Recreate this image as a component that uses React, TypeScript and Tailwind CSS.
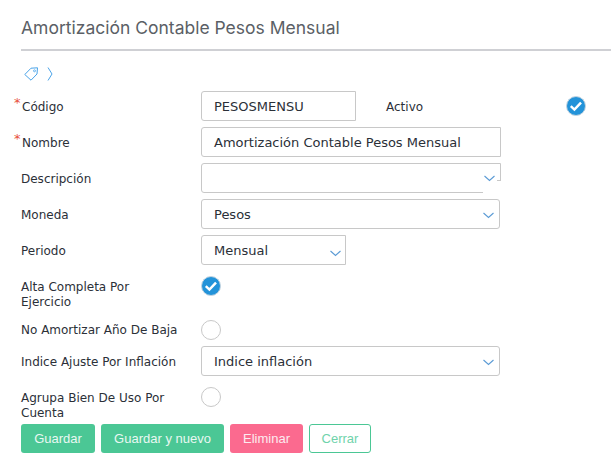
const LABEL = "font-['DejaVu_Sans',sans-serif] text-[12px] leading-[15px] text-[#2b3038]";
const CONTROL = "flex items-center h-[30px] bg-white border border-[#c8c8c8] pl-3 pt-[2px] font-['DejaVu_Sans',sans-serif] text-[13px] text-[#2b3038]";

function Chevron({ className }: { className: string }) {
  return (
    <svg className={className} width="11" height="7" viewBox="0 0 11 7" fill="none">
      <path d="M0.5 1 L5.5 5.5 L10.5 1" stroke="#5b9bd5" strokeWidth="1.1" />
    </svg>
  );
}

function Check({ checked }: { checked: boolean }) {
  if (!checked) {
    return <div className="w-5 h-5 rounded-full bg-white border border-[#c8c8c8]" />;
  }
  return (
    <svg width="20" height="20" viewBox="0 0 20 20">
      <circle cx="10" cy="10" r="9.5" fill="#2393d9" stroke="#c3d4e0" strokeWidth="1" />
      <path d="M4.8 10.2 L8.4 13.6 L15 6.6" fill="none" stroke="#fff" strokeWidth="2.5" />
    </svg>
  );
}

function Required() {
  return <span className="absolute left-[-7px] top-[-3px] text-[#e8503a] text-[13px] leading-[15px] font-['DejaVu_Sans',sans-serif]">*</span>;
}

function Row({ label, required, children }: { label: string; required?: boolean; children: React.ReactNode }) {
  return (
    <div className="flex items-center h-[30px] mb-[6px]">
      <div className={`${LABEL} w-[180px] relative pt-[2px] ${required ? 'pl-[1px]' : ''}`}>
        {required && <Required />}
        {label}
      </div>
      {children}
    </div>
  );
}

export default function App() {
  return (
    <div className="w-[611px] h-[462px] bg-white overflow-hidden">
      <h1 className="h-[49px] ml-[21px] pt-[17px] font-['Inter',sans-serif] text-[17.5px] leading-[22px] text-[#5b5f66]">
        Amortización Contable Pesos Mensual
      </h1>
      <div className="ml-[21px] h-[2px] bg-[#cfd0d4]" />

      <div className="flex items-center h-[14px] mt-[16px] ml-[24px] gap-[4px]">
        <svg width="15" height="14" viewBox="0 0 15 14" fill="none">
          <path d="M0.8 7.5 L7 1.2 L13.5 0.8 L13 7 L7 13.2 Z" stroke="#4aa3e8" strokeWidth="1" strokeLinejoin="round" />
          <circle cx="10.5" cy="3.8" r="1" stroke="#4aa3e8" strokeWidth="0.8" />
        </svg>
        <svg className="ml-[4px]" width="6" height="14" viewBox="0 0 6 14" fill="none">
          <path d="M1 0.5 L5 7 L1 13.5" stroke="#4aa3e8" strokeWidth="1" />
        </svg>
      </div>

      <div className="ml-[21px] mt-[10px]">
        <Row label="Código" required>
          <div className={`${CONTROL} w-[155px] rounded-l-[3px]`}>PESOSMENSU</div>
          <div className={`${LABEL} ml-[30px] w-[180px] pt-[2px]`}>Activo</div>
          <Check checked />
        </Row>
        <Row label="Nombre" required>
          <div className={`${CONTROL} w-[300px] rounded-l-[3px]`}>Amortización Contable Pesos Mensual</div>
        </Row>
        <Row label="Descripción">
          <div className={`${CONTROL} w-[300px] rounded-l-[3px] relative`}>
            <div className="absolute right-[-1px] bottom-[-1px] w-[18px] h-[12px] bg-white" />
            <div className="absolute right-[-1px] top-[16px] w-[4px] h-[1px] bg-[#c8c8c8]" />
            <Chevron className="absolute right-[5px] top-[11px]" />
          </div>
        </Row>
        <Row label="Moneda">
          <div className={`${CONTROL} w-[299px] rounded-[3px] relative`}>
            Pesos
            <Chevron className="absolute right-[5px] top-[12px]" />
          </div>
        </Row>
        <Row label="Periodo">
          <div className={`${CONTROL} w-[145px] rounded-l-[3px] relative`}>
            Mensual
            <Chevron className="absolute right-[4px] top-[14px]" />
          </div>
        </Row>

        <div className="flex h-[49px] pt-[5px]">
          <div className={`${LABEL} w-[180px] pt-[4px]`}>Alta Completa Por<br />Ejercicio</div>
          <Check checked />
        </div>
        <div className="flex items-center h-[20px] mb-[6px]">
          <div className={`${LABEL} w-[180px]`}>No Amortizar Año De Baja</div>
          <Check checked={false} />
        </div>
        <Row label="Indice Ajuste Por Inflación">
          <div className={`${CONTROL} w-[299px] rounded-[3px] relative`}>
            Indice inflación
            <Chevron className="absolute right-[5px] top-[12px]" />
          </div>
        </Row>
        <div className="flex h-[42px] pt-[5px]">
          <div className={`${LABEL} w-[180px] pt-[4px]`}>Agrupa Bien De Uso Por<br />Cuenta</div>
          <Check checked={false} />
        </div>

        <div className="flex gap-[6px] font-['Liberation_Sans',sans-serif] text-[13px]">
          <button className="w-[74px] h-[29px] rounded-[3px] bg-[#4bc795] text-[#e9f8f2]">Guardar</button>
          <button className="w-[123px] h-[29px] rounded-[3px] bg-[#4bc795] text-[#e9f8f2]">Guardar y nuevo</button>
          <button className="w-[73px] h-[29px] rounded-[3px] bg-[#fb6a8f] text-[#fdeaf0]">Eliminar</button>
          <button className="w-[62px] h-[29px] rounded-[3px] bg-white border border-[#4bc795] text-[#6fd3ab]">Cerrar</button>
        </div>
      </div>
    </div>
  );
}
